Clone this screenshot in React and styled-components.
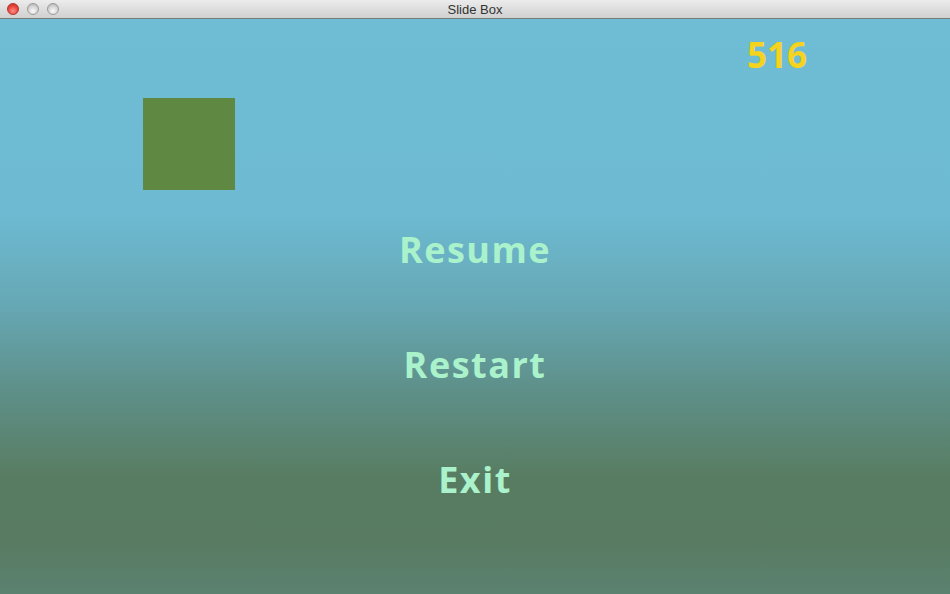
import React from 'react';
import styled, { createGlobalStyle } from 'styled-components';

const GlobalStyle = createGlobalStyle`
  html, body {
    margin: 0;
    padding: 0;
    overflow: hidden;
  }
`;

const Window = styled.div`
  width: 950px;
  height: 594px;
  display: flex;
  flex-direction: column;
  font-family: "Open Sans", "DejaVu Sans", sans-serif;
`;

const TitleBar = styled.div`
  height: 18px;
  flex: none;
  display: flex;
  align-items: center;
  position: relative;
  background: linear-gradient(#ececec, #d0d0d0);
  border-bottom: 1px solid #7a7a7a;
`;

const Lights = styled.div`
  display: flex;
  gap: 8px;
  padding-left: 7px;
`;

const Light = styled.span`
  width: 12px;
  height: 12px;
  border-radius: 50%;
  box-sizing: border-box;
  border: 1px solid ${p => (p.red ? '#b0332c' : '#9a9a9a')};
  background: ${p =>
    p.red
      ? 'radial-gradient(circle at 50% 70%, #ff8f84 0%, #e8473c 55%, #c22a20 100%)'
      : 'radial-gradient(circle at 50% 70%, #fafafa 0%, #d4d4d4 55%, #a9a9a9 100%)'};
`;

const Title = styled.div`
  position: absolute;
  left: 0;
  right: 0;
  text-align: center;
  font-family: "Liberation Sans", Arial, sans-serif;
  font-size: 13px;
  color: #333;
  pointer-events: none;
`;

const Stage = styled.div`
  flex: 1;
  position: relative;
  display: flex;
  flex-direction: column;
  background: linear-gradient(
    to bottom,
    #6fbdd4 0px,
    #6dbad2 195px,
    #66a7b3 290px,
    #5e9089 370px,
    #587c61 460px,
    #587b61 520px,
    #5b8170 575px
  );
`;

const Hud = styled.div`
  padding: 14px 143px 0 0;
  text-align: right;
  font-size: 35px;
  line-height: 44px;
  font-weight: 700;
  color: #f6d31c;
`;

const Tile = styled.div`
  position: absolute;
  left: 143px;
  top: 79px;
  width: 92px;
  height: 92px;
  background: #5f8943;
`;

const Menu = styled.div`
  margin-top: 150px;
  display: flex;
  flex-direction: column;
  align-items: center;
  gap: 69px;
`;

const MenuItem = styled.div`
  font-size: 36px;
  line-height: 46px;
  font-weight: 700;
  letter-spacing: 1.5px;
  color: #aaf2cb;
  cursor: pointer;
`;

export default function App() {
  return (
    <>
      <GlobalStyle />
      <Window>
        <TitleBar>
          <Lights>
            <Light red />
            <Light />
            <Light />
          </Lights>
          <Title>Slide Box</Title>
        </TitleBar>
        <Stage>
          <Hud>516</Hud>
          <Tile />
          <Menu>
            <MenuItem>Resume</MenuItem>
            <MenuItem>Restart</MenuItem>
            <MenuItem>Exit</MenuItem>
          </Menu>
        </Stage>
      </Window>
    </>
  );
}
